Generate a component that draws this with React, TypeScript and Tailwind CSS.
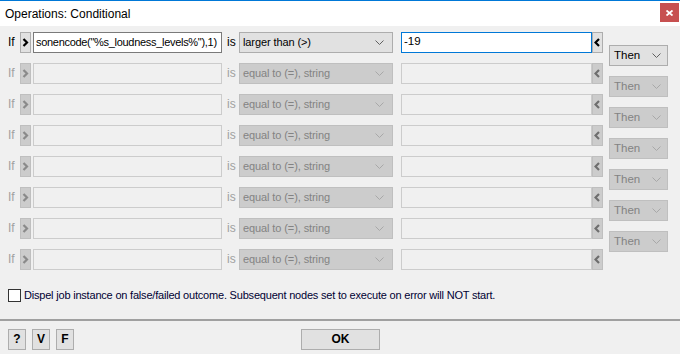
const sans = "font-['Liberation_Sans',Arial,sans-serif]";

function Chevron({ on }: { on: boolean }) {
  return (
    <svg width="9" height="5" viewBox="0 0 9 5" className="shrink-0">
      <polyline points="0.5,0.5 4.5,4.5 8.5,0.5" fill="none" stroke={on ? "#606060" : "#a8a8a8"} strokeWidth="1" />
    </svg>
  );
}

function Arrow({ dir, color }: { dir: "r" | "l"; color: string }) {
  const pts = dir === "r" ? "1.5,1 5,4.5 1.5,8" : "5,1 1.5,4.5 5,8";
  return (
    <svg width="7" height="9" viewBox="0 0 7 9">
      <polyline points={pts} fill="none" stroke={color} strokeWidth="2.2" />
    </svg>
  );
}

function Row({ on }: { on: boolean }) {
  return (
    <div className="flex h-5 items-center">
      <span className={`w-3 text-[12px] ${on ? "text-black" : "text-[#a0a0a0]"}`}>If</span>
      <div
        className={`flex h-[21px] w-[11px] items-center justify-center border ${
          on ? "border-[#adadad] bg-[#e1e1e1]" : "border-[#bfbfbf] bg-[#cccccc]"
        }`}
      >
        <Arrow dir="r" color={on ? "#000" : "#8a8a8a"} />
      </div>
      <div
        className={`ml-[2px] flex h-[21px] w-[189px] items-center overflow-hidden whitespace-nowrap border pl-[2px] pr-0 text-[11px] tracking-[-0.3px] ${
          on ? "border-[#7a7a7a] bg-white text-black" : "border-[#cccccc] bg-[#f0f0f0]"
        }`}
      >
        {on ? 'sonencode("%s_loudness_levels%"),1)' : ""}
      </div>
      <span className={`w-[17px] pl-[5px] text-[12px] ${on ? "text-black" : "text-[#a0a0a0]"}`}>is</span>
      <div
        className={`flex h-[21px] w-[154px] items-center justify-between border pl-[3px] pr-[8px] text-[11px] tracking-[-0.1px] ${
          on ? "border-[#adadad] bg-[#e1e1e1] text-black" : "border-[#bfbfbf] bg-[#cccccc] text-[#838383]"
        }`}
      >
        <span>{on ? "larger than (>)" : "equal to (=), string"}</span>
        <Chevron on={on} />
      </div>
      <div
        className={`ml-2 flex h-[21px] w-[191px] items-center border px-[2px] text-[11.5px] ${
          on ? "border-[#0078d7] bg-white text-black" : "border-[#cccccc] bg-[#f0f0f0]"
        }`}
      >
        {on ? "-19" : ""}
      </div>
      <div
        className={`flex h-[21px] w-[11px] items-center justify-center border ${
          on ? "border-[#adadad] bg-[#e1e1e1]" : "border-[#bfbfbf] bg-[#cccccc]"
        }`}
      >
        <Arrow dir="l" color={on ? "#000" : "#6e6e6e"} />
      </div>
    </div>
  );
}

function Then({ on }: { on: boolean }) {
  return (
    <div
      className={`flex h-[21px] w-[59px] items-center justify-between border pl-[4px] pr-[6px] text-[11.5px] ${
        on ? "border-[#adadad] bg-[#e1e1e1] text-black" : "border-[#bfbfbf] bg-[#cccccc] text-[#838383]"
      }`}
    >
      <span>Then</span>
      <Chevron on={on} />
    </div>
  );
}

function SmallBtn({ label }: { label: string }) {
  return (
    <div className="flex h-[21px] w-[18px] items-center justify-center border border-[#adadad] bg-[#e1e1e1] text-[12px] font-bold text-black">
      {label}
    </div>
  );
}

export default function App() {
  const rows = [true, false, false, false, false, false, false, false];
  const thens = [true, false, false, false, false, false, false];

  return (
    <div className={`h-[354px] w-[680px] overflow-hidden bg-[#f0f0f0] ${sans}`}>
      {/* title bar */}
      <div className="flex h-[26px] items-center justify-between border-t border-[#0078d7] bg-white">
        <span className="pl-[5px] text-[12px] text-black">Operations: Conditional</span>
        <div className="mr-[1px] mt-[2px] flex h-[19px] w-[19px] items-center justify-center self-start bg-[#c75050]">
          <svg width="7" height="6" viewBox="0 0 7 6">
            <path d="M0.5 0.5 L6.5 5.5 M6.5 0.5 L0.5 5.5" stroke="#fff" strokeWidth="1.8" />
          </svg>
        </div>
      </div>

      {/* condition rows */}
      <div className="flex pl-2 pt-[6px]">
        <div className="flex flex-col gap-[11px]">
          {rows.map((on, i) => (
            <Row key={i} on={on} />
          ))}
        </div>
        <div className="ml-[6px] mt-[13px] flex flex-col gap-[10px]">
          {thens.map((on, i) => (
            <Then key={i} on={on} />
          ))}
        </div>
      </div>

      {/* dispel option */}
      <div className="mt-[18px] flex items-center pl-2">
        <div className="h-[13px] w-[13px] border border-[#333] bg-white" />
        <span className="ml-[3px] text-[11px] tracking-[-0.2px] text-[#000033]">
          Dispel job instance on false/failed outcome. Subsequent nodes set to execute on error will NOT start.
        </span>
      </div>

      <div className="mt-[15px] h-[2px] bg-[#a0a0a0]" />

      {/* footer */}
      <div className="mt-[8px] flex items-center gap-[6px] pl-2">
        <SmallBtn label="?" />
        <SmallBtn label="V" />
        <SmallBtn label="F" />
        <div className="ml-[221px] flex h-[21px] w-[79px] items-center justify-center border border-[#adadad] bg-[#e1e1e1] text-[12px] font-bold text-black">
          OK
        </div>
      </div>
    </div>
  );
}
